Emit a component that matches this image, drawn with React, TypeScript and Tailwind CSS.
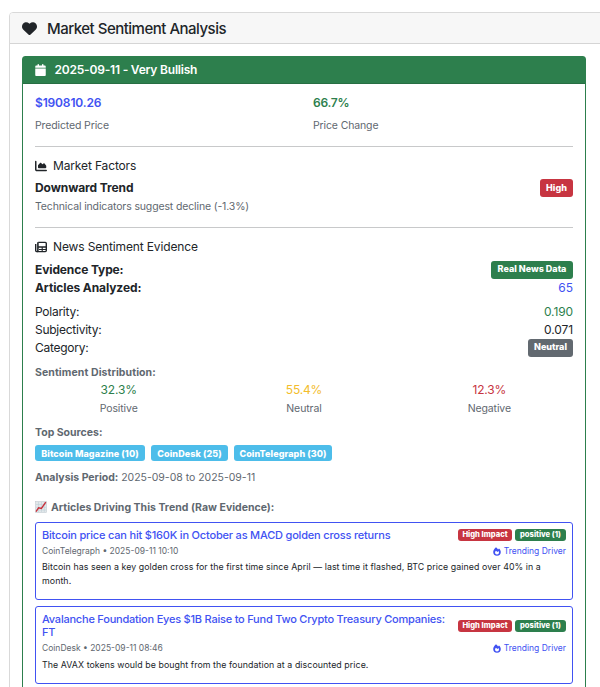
import type { ReactNode } from "react";
import { FaCalendar, FaChartArea, FaHeart } from "react-icons/fa6";

function Row({ label, children, className = "" }: { label: ReactNode; children: ReactNode; className?: string }) {
  return (
    <div className={`flex h-[18px] items-center justify-between text-[12px] leading-[18px] ${className}`}>
      <span>{label}</span>
      {children}
    </div>
  );
}

function Share({ value, label, color }: { value: string; label: string; color: string }) {
  return (
    <div className="flex-1 text-center">
      <div className={`h-[18px] text-[12px] leading-[18px] tracking-[-0.15px] ${color}`}>{value}</div>
      <div className="h-[18px] text-[10.5px] leading-[20px] tracking-[-0.1px] text-[#5f6870]">{label}</div>
    </div>
  );
}

function TrendEmoji() {
  return (
    <svg width="12" height="12" viewBox="0 0 12 12" className="shrink-0">
      <rect x="0.5" y="0.5" width="11" height="11" fill="#e3e8ea" stroke="#c3cbd0" strokeWidth="0.6" />
      <path d="M3.5 1v10M6.5 1v10M9.3 1v10M1 3.5h10M1 6.3h10M1 9h10" stroke="#b9cdd6" strokeWidth="0.5" />
      <path d="M1 10.6 3.6 6.8 6.4 7.4 10.8 1.2" fill="none" stroke="#c8323c" strokeWidth="1.4" />
    </svg>
  );
}

function NewspaperIcon() {
  return (
    <svg width="12" height="12" viewBox="0 0 12 12" fill="none" stroke="currentColor" className="shrink-0">
      <path d="M3.2 1.4h7.1a1 1 0 0 1 1 1v7.2a1 1 0 0 1-1 1H1.7a1 1 0 0 1-1-1V3" strokeWidth="1.4" />
      <path d="M2.900 1.200v8.400a1 1 0 0 1-1 1M3 6h8.200" strokeWidth="1.600" />
      <path d="M7.2 6v4.5M4 8.5h7" strokeWidth="1.1" />
    </svg>
  );
}

function FireIcon() {
  return (
    <svg width="8" height="9" viewBox="0 0 8 9" fill="currentColor" className="shrink-0">
      <path
        fillRule="evenodd"
        d="M3 .3c.8.6 1.5 1.3 2.1 2.1.3-.4.5-.7.9-1C7.2 2.5 7.8 3.8 7.8 5A3.8 3.7 0 0 1 .2 5C.2 3.3 1.5 1.6 3 .3ZM2.9 3.7C2.3 4.4 2 4.9 2 5.5a2 1.9 0 0 0 4 0c0-.5-.2-1-.6-1.4l-.8.9Z"
      />
    </svg>
  );
}

interface ArticleProps {
  title: ReactNode;
  meta: string;
  body: ReactNode;
  titleClass: string;
  badgeClass: string;
  bodyClass: string;
}

function Article({ title, meta, body, titleClass, badgeClass, bodyClass }: ArticleProps) {
  return (
    <article className="mt-[6px] h-[78px] rounded-[3px] border border-[#4152f2] px-[6px] pt-[6px]">
      <div className={`flex justify-between ${titleClass}`}>
        <h3 className="whitespace-nowrap text-[11px] font-medium leading-[13px] text-[#4152f2]">{title}</h3>
        <div className={`flex gap-[3px] text-[7.6px] font-extrabold leading-[11px] text-white ${badgeClass}`}>
          <span className="h-[12px] w-[54px] rounded-[3px] bg-[#c73541] text-center">High Impact</span>
          <span className="h-[12px] w-[51px] rounded-[3px] bg-[#2d7f4d] text-center">positive (1)</span>
        </div>
      </div>
      <div className="flex h-[14px] items-center justify-between text-[8.5px] leading-[14px]">
        <span className="text-[#5f6870]">{meta}</span>
        <span className="flex items-center gap-[3px] text-[#4152f2]">
          <FireIcon />
          Trending Driver
        </span>
      </div>
      <p className={`whitespace-nowrap text-[8.8px] leading-[14px] tracking-[0.075px] text-[#212529] ${bodyClass}`}>{body}</p>
    </article>
  );
}

export default function App() {
  return (
    <div className="h-[687px] w-[600px] overflow-hidden bg-white pl-[9px] pt-[12px] font-['Inter','Liberation_Sans',sans-serif] text-[#212529]">
      <section className="h-[720px] w-[620px] rounded-tl-[4px] border border-[#d9d9d9]">
        <header className="flex h-[31px] items-center gap-[10px] rounded-tl-[3px] border-b border-[#d5d5d5] bg-[#f7f7f7] pl-[12px]">
          <FaHeart className="size-[15px]" />
          <h1 className="pt-px text-[15px] font-medium leading-[20px] tracking-[-0.5px]">Market Sentiment Analysis</h1>
        </header>
        <div className="pl-[12px] pt-[12px]">
          <section className="h-[700px] w-[564px] rounded-t-[3px] border border-[#2d7f4d]">
            <header className="flex h-[27px] items-center gap-[8.5px] border-b border-[#276e43] bg-[#2d7f4d] pl-[12px] text-white">
              <FaCalendar className="h-[12px] w-[11px]" />
              <h2 className="text-[12px] font-semibold leading-[18px] tracking-[-0.2px]">2025-09-11 - Very Bullish</h2>
            </header>
            <div className="px-[12px] pt-[10px]">
              <div className="-mx-[9px] grid grid-cols-2">
                <div className="px-[9px]">
                  <div className="text-[12px] font-semibold leading-[18px] tracking-[-0.15px] text-[#4152f2]">$190810.26</div>
                  <div className="mt-[4px] h-[18px] text-[10.5px] leading-[20px] tracking-[-0.13px] text-[#5f6870]">Predicted Price</div>
                </div>
                <div className="px-[9px]">
                  <div className="text-[12px] font-semibold leading-[18px] tracking-[-0.25px] text-[#2d7f4d]">66.7%</div>
                  <div className="mt-[4px] h-[18px] text-[10.5px] leading-[20px] tracking-[-0.13px] text-[#5f6870]">Price Change</div>
                </div>
              </div>
              <div className="mt-[12px] h-px bg-[#c8c9ca]" />
              <h3 className="mt-[10px] flex h-[18px] items-center gap-[6px] text-[12px] leading-[18px] tracking-[-0.14px]">
                <FaChartArea className="size-[12px]" />
                Market Factors
              </h3>
              <Row label={<b className="font-bold tracking-[-0.1px]">Downward Trend</b>} className="mt-[4px]">
                <span className="h-[18px] w-[33px] rounded-[3px] bg-[#c73541] text-center text-[9px] font-extrabold leading-[18px] text-white">High</span>
              </Row>
              <div className="h-[18px] text-[10.5px] leading-[20px] tracking-[-0.14px] text-[#5f6870]">Technical indicators suggest decline (-1.3%)</div>
              <div className="mt-[12px] h-px bg-[#c8c9ca]" />
              <h3 className="mt-[10px] flex h-[18px] items-center gap-[6px] text-[12px] leading-[18px] tracking-[-0.14px]">
                <NewspaperIcon />
                News Sentiment Evidence
              </h3>
              <Row label={<b className="font-bold tracking-[-0.12px]">Evidence Type:</b>} className="mt-[5px]">
                <span className="h-[18px] w-[82px] rounded-[3px] bg-[#2d7f4d] text-center text-[9px] font-extrabold leading-[16px] text-white">Real News Data</span>
              </Row>
              <Row label={<b className="font-bold tracking-[-0.1px]">Articles Analyzed:</b>}>
                <span className="text-[#4152f2]">65</span>
              </Row>
              <Row label="Polarity:" className="mt-[6px] tracking-[-0.26px]">
                <span className="tracking-[-0.1px] text-[#2d7f4d]">0.190</span>
              </Row>
              <Row label="Subjectivity:" className="tracking-[-0.26px]">
                <span className="tracking-[-0.1px]">0.071</span>
              </Row>
              <Row label="Category:" className="tracking-[-0.26px]">
                <span className="h-[18px] w-[45px] rounded-[3px] bg-[#626970] text-center text-[9px] font-extrabold leading-[16px] tracking-normal text-white">Neutral</span>
              </Row>
              <div className="mt-[6px] h-[18px] text-[10.5px] font-bold leading-[20px] tracking-[0.09px] text-[#5f6870]">Sentiment Distribution:</div>
              <div className="-mx-[9px] flex">
                <Share value="32.3%" label="Positive" color="text-[#2d7f4d]" />
                <Share value="55.4%" label="Neutral" color="text-[#f3bd2c]" />
                <Share value="12.3%" label="Negative" color="text-[#c73541]" />
              </div>
              <div className="mt-[7px] text-[10.5px] font-bold leading-[18px] text-[#5f6870]">Top Sources:</div>
              <div className="mt-[3px] flex gap-[6px] text-center text-[9px] font-extrabold leading-[17px] tracking-[0.08px] text-white">
                <span className="h-[16px] w-[110px] rounded-[3px] bg-[#4dbdea]">Bitcoin Magazine (10)</span>
                <span className="h-[16px] w-[77px] rounded-[3px] bg-[#4dbdea]">CoinDesk (25)</span>
                <span className="h-[16px] w-[98px] rounded-[3px] bg-[#4dbdea]">CoinTelegraph (30)</span>
              </div>
              <div className="mt-[8px] text-[10.5px] leading-[18px] tracking-[-0.02px] text-[#5f6870]">
                <b className="font-bold">Analysis Period:</b> 2025-09-08 to 2025-09-11
              </div>
              <div className="mt-[11px] flex h-[18px] items-center gap-[4px] text-[10.5px] font-bold leading-[18px] tracking-[0.02px] text-[#5f6870]">
                <TrendEmoji />
                <span className="pt-[2px]">Articles Driving This Trend (Raw Evidence):</span>
              </div>
              <Article
                title="Bitcoin price can hit $160K in October as MACD golden cross returns"
                meta="CoinTelegraph • 2025-09-11 10:10"
                body={<>Bitcoin has seen a key golden cross for the first time since April — last time it flashed, BTC price gained over 40% in a<br />month.</>}
                titleClass="h-[15px] tracking-[-0.19px]"
                badgeClass="tracking-normal"
                bodyClass="mt-[2px]"
              />
              <Article
                title={<>Avalanche Foundation Eyes $1B Raise to Fund Two Crypto Treasury Companies:<br />FT</>}
                meta="CoinDesk • 2025-09-11 08:46"
                body="The AVAX tokens would be bought from the foundation at a discounted price."
                titleClass="h-[28px] tracking-[-0.22px]"
                badgeClass="pt-[7px] tracking-normal"
                bodyClass="mt-[3px]"
              />
            </div>
          </section>
        </div>
      </section>
    </div>
  );
}
